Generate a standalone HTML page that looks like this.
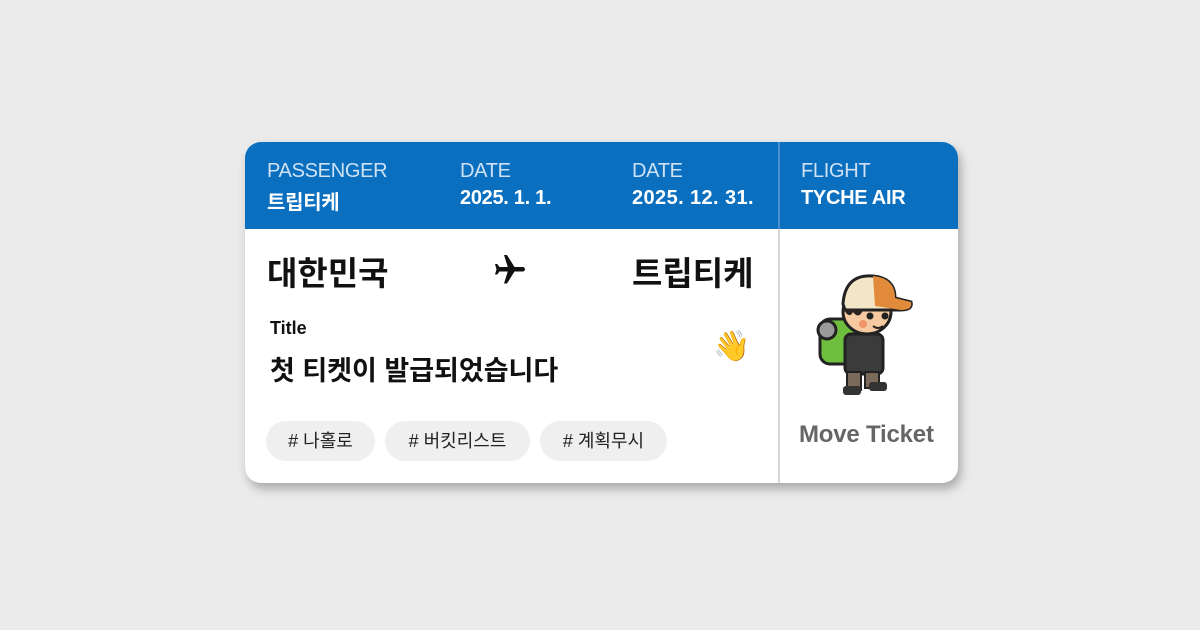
<!DOCTYPE html>
<html><head><meta charset="utf-8"><style>
body{margin:0;width:1200px;height:630px;background:#ebebeb;font-family:"Liberation Sans","Noto Sans CJK KR",sans-serif;position:relative;overflow:hidden}
.card{position:absolute;left:245px;top:142px;width:713px;height:341px;background:#fff;border-radius:16px;overflow:hidden;box-shadow:3px 6px 10px rgba(0,0,0,.28)}
.hdr{position:absolute;left:0;top:0;width:713px;height:87px;background:#0b6fc0}
.div{position:absolute;left:533px;top:0;width:2px;height:341px;background:#d8d8d8}
.t{position:absolute;color:#fff;white-space:nowrap}
.lab{font-size:20px;color:#cfe2f4;top:18px;letter-spacing:-0.3px}
.val{font-size:20px;font-weight:bold;top:45px;letter-spacing:-0.3px}
.big{position:absolute;top:105px;font-size:33px;font-weight:bold;color:#111}
.tag{position:absolute;top:279px;height:40px;border-radius:20px;background:#efefef;font-size:18px;color:#222;line-height:40px;text-align:center}
</style></head><body>
<div class="card">
 <div class="hdr">
  <div class="t lab" style="left:22px">PASSENGER</div><div class="t val" style="left:22px;top:44px">트립티케</div>
  <div class="t lab" style="left:215px">DATE</div><div class="t val" style="left:215px">2025. 1. 1.</div>
  <div class="t lab" style="left:387px">DATE</div><div class="t val" style="left:387px;letter-spacing:0.4px">2025. 12. 31.</div>
  <div class="t lab" style="left:556px">FLIGHT</div><div class="t val" style="left:556px">TYCHE AIR</div>
 </div>
 <div class="div" style="top:87px;height:254px"></div>
 <div class="div" style="height:87px;background:#4a90d0"></div>
 <div class="big" style="left:22px">대한민국</div>
 <svg style="position:absolute;left:246px;top:110px" width="38" height="36" viewBox="0 0 24 24"><path fill="#111" d="M21 16v-2l-8-5V3.5C13 2.7 12.3 2 11.5 2S10 2.7 10 3.5V9l-8 5v2l8-2.5V19l-2 1.5V22l3.5-1 3.5 1v-1.5L13 19v-5.5z" transform="rotate(90 12 12)"/></svg>
 <div class="big" style="left:387px">트립티케</div>
 <div style="position:absolute;left:25px;top:176px;font-size:18px;font-weight:bold;color:#111">Title</div>
 <div style="position:absolute;left:25px;top:207px;font-size:27px;font-weight:bold;color:#111">첫 티켓이 발급되었습니다</div>
 <div style="position:absolute;left:468px;top:187px;font-size:30px">👋</div>
 <div class="tag" style="left:21px;width:109px"># 나홀로</div>
 <div class="tag" style="left:140px;width:145px"># 버킷리스트</div>
 <div class="tag" style="left:295px;width:127px"># 계획무시</div>
 <svg style="position:absolute;left:570px;top:122px" width="110" height="135" viewBox="0 0 110 135">
  <rect x="5" y="55" width="35" height="45" rx="10" fill="#6fbf3f" stroke="#222" stroke-width="3"/>
  <circle cx="12" cy="66" r="9" fill="#9a9a9a" stroke="#222" stroke-width="3"/>
  <rect x="30" y="70" width="38" height="40" rx="6" fill="#3b3b3b" stroke="#222" stroke-width="3"/>
  <rect x="32" y="108" width="14" height="18" fill="#7a6a5a" stroke="#222" stroke-width="2"/>
  <rect x="50" y="108" width="14" height="16" fill="#7a6a5a" stroke="#222" stroke-width="2"/>
  <rect x="28" y="122" width="18" height="9" rx="3" fill="#333"/>
  <rect x="54" y="118" width="18" height="9" rx="3" fill="#333"/>
  <ellipse cx="52" cy="48" rx="24" ry="22" fill="#f6c9a0" stroke="#222" stroke-width="3"/>
  <path d="M28 40 Q30 10 58 12 Q80 14 80 34 L96 38 Q98 46 86 46 L30 46 Z" fill="#f2e6c6" stroke="#222" stroke-width="3"/>
  <path d="M58 12 Q80 14 80 34 L96 38 Q98 46 86 46 L60 42 Z" fill="#e08a3a"/>
  <path d="M28 44 Q34 56 38 48 Q44 56 48 46" fill="#2a2420"/>
  <circle cx="55" cy="52" r="3.5" fill="#222"/><circle cx="70" cy="52" r="3.5" fill="#222"/>
  <circle cx="48" cy="60" r="4" fill="#f0946a"/><path d="M58 62 Q63 66 68 62" stroke="#222" stroke-width="2" fill="none"/>
 </svg>
 <div style="position:absolute;left:554px;top:279px;font-size:24px;color:#666;font-weight:bold;letter-spacing:-0.2px">Move Ticket</div>
</div>
</body></html>
